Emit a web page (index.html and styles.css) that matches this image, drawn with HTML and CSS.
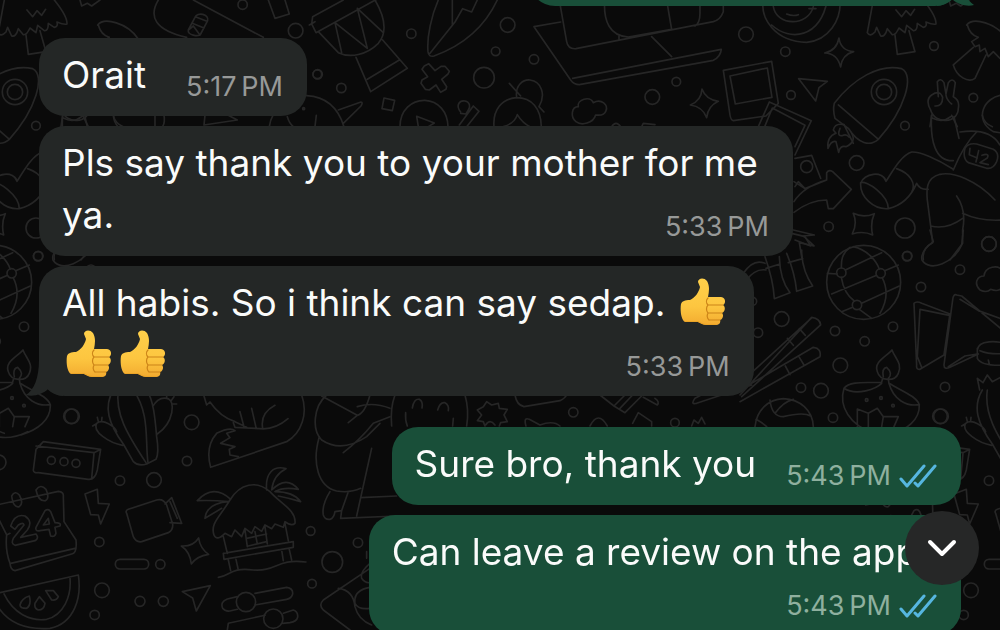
FILE: index.html
```
<!DOCTYPE html>
<html lang="en">
<head>
  <meta charset="UTF-8">
  <meta name="viewport" content="width=device-width, initial-scale=1.0">
  <title>Chat</title>
  <link rel="stylesheet" href="styles.css">
</head>
<body>
  <!-- Wallpaper: one set of doodles, repeated sideways -->
  <svg class="wallpaper" viewBox="0 0 1000 630" preserveAspectRatio="xMinYMin slice" aria-hidden="true">
    <g id="doodles">
      <g transform="scale(.3333)">
        <path d="M240 0L245 18L262 10L275 18L300 0M475 0C445 50 465 90 560 112M580 0L790 112M805 0L825 55L868 42L855 0"/>
        <path d="M565 90L585 52C592 35 628 42 623 62L602 102C595 112 562 105 565 90M577 70L612 84M586 50L621 64M568 88L580 78L600 105"/>
        <circle cx="728" cy="14" r="14"/><circle cx="887" cy="92" r="22"/><circle cx="952" cy="223" r="13"/>
        <path d="M188 346L183 380M248 346L265 380M190 354Q220 370 245 350M340 346Q345 370 370 380M465 346V380M492 346Q496 365 488 380M615 346L612 375L712 360L682 344"/>
        <path d="M808 380C815 330 860 285 920 287C980 290 1015 325 1032 380M862 350Q868 370 880 380M949 346L945 380M1015 330L1083 306Q1090 306 1083 318L1030 370"/>
        <circle cx="911" cy="326" r="3"/>
      </g>
      <g transform="translate(300 0) scale(.3333)">
        <path d="M130 0L38 50L35 72L48 98L235 -5M28 75L45 65M55 95L115 158C150 175 200 165 235 130C260 100 260 60 225 0M105 68L125 158M105 68L202 145L172 25L250 98M168 172L212 275L322 205L248 120M202 238L298 180"/>
        <circle cx="53" cy="223" r="14"/><circle cx="124" cy="264" r="14"/><circle cx="334" cy="101" r="14"/>
        <path d="M252 294L284 301L277 332L246 326Z"/>
        <path d="M415 0C395 45 380 110 384 155Q386 172 402 168C480 140 550 90 592 0M457 0V73M390 160L465 66L488 26L515 36L532 0"/>
        <path d="M373 198L386 191L405 212L423 199L435 199L448 214L444 222L425 238L440 260L438 268L422 277L408 255L388 270L376 268L363 250L366 240L383 230L366 208Z"/>
        <circle cx="623" cy="75" r="22"/><circle cx="587" cy="154" r="13"/><circle cx="552" cy="233" r="31"/><circle cx="702" cy="178" r="14"/>
        <path d="M300 380C300 330 335 300 375 301C415 303 443 335 444 380M355 380L350 349L403 369L385 380"/>
        <path d="M482 336C465 315 480 300 495 303C510 306 512 320 505 330L498 342L482 340M478 375L520 318L537 334L500 380"/>
        <path d="M582 380C578 330 605 296 650 293C695 293 723 325 724 380M610 380Q645 370 652 344Q668 370 690 380M628 250L662 288M650 292C645 255 670 238 690 240C725 244 738 285 717 320L732 336"/>
        <path d="M828 365C810 350 815 320 835 320C830 300 870 285 880 308C905 295 925 315 918 332C912 350 895 345 887 345C880 370 845 378 828 365"/>
        <path d="M778 0L800 125Q804 148 828 146L1240 65Q1262 58 1270 35V0M782 66L702 80L812 240Q822 254 838 254L1240 181Q1262 170 1264 148L818 235M914 0C910 65 930 108 985 111M957 107V118M985 111L1115 88M1115 88L1100 0M1055 110L1115 170M1185 78Q1200 70 1200 40V0"/>
        <circle cx="1057" cy="291" r="22"/><circle cx="1129" cy="245" r="13"/>
        <path d="M935 380Q948 360 962 380M1025 380L1030 370L1065 374"/>
      </g>
      <g transform="translate(640 0) scale(.3333)">
        <path d="M370 0C360 55 405 125 500 127C565 122 605 60 600 0M395 75C450 125 540 115 562 0M400 20C410 80 505 80 520 20M440 42Q460 50 475 44M507 26H528"/>
        <circle cx="318" cy="103" r="22"/><circle cx="436" cy="155" r="14"/><circle cx="453" cy="285" r="13"/><circle cx="882" cy="138" r="13"/><circle cx="1000" cy="293" r="13"/><circle cx="795" cy="377" r="13"/><circle cx="650" cy="489" r="22"/><circle cx="566" cy="680" r="14"/><circle cx="795" cy="684" r="30"/><circle cx="1047" cy="732" r="22"/><circle cx="801" cy="769" r="14"/>
        <path d="M597 114Q602 152 641 155Q606 164 602 201Q592 160 554 159Q590 152 597 114ZM186 267Q197 298 235 304Q204 318 200 353Q188 320 151 315Q184 302 186 267ZM640 640Q670 655 703 641Q690 670 698 705Q670 692 637 702Q653 670 640 640ZM476 236L562 244L537 263L527 303Z"/>
        <path d="M250 211L395 184L415 310L378 348L280 362Q272 360 270 345ZM270 228L382 204L396 292L286 312ZM355 380L388 306L514 362L465 465M372 385L397 324L495 376L465 440"/>
        <path d="M700 0L682 98Q690 112 705 96L710 82L722 108Q735 112 742 86L757 104Q767 106 777 84L795 98L800 76L820 92Q832 94 832 70L850 82Q862 80 858 66Q880 75 888 72Q890 50 850 0M765 105L772 163L825 155L807 92M768 30L785 50L798 32L812 46L824 28"/>
        <path d="M583 310C640 235 720 190 785 206C825 225 795 330 715 418C690 440 655 432 625 385L585 355Q578 330 583 310M595 315L712 415M640 430L612 374"/>
        <circle cx="732" cy="276" r="38"/><circle cx="732" cy="276" r="23"/>
        <path d="M612 374Q585 368 580 390L588 400Q560 410 564 445Q575 420 588 425L596 457Q600 435 618 440Q650 425 635 400M600 385Q590 410 606 407Q620 400 628 412"/>
        <path d="M980 75C1000 50 1070 70 1100 115L1098 180M982 75Q990 105 1015 112L995 125L1005 140L1018 135L1020 155L1035 145L1045 170L1060 155L1080 175M1000 142L940 195C950 230 985 250 1005 235L1038 165"/>
        <path d="M895 290L892 245Q902 232 912 248L918 282L925 248Q937 232 946 248L940 290Q960 300 955 325C955 370 885 375 872 330Q855 300 875 285Q900 268 908 292Q908 320 885 318M918 285Q920 300 935 312M875 345C870 420 885 485 940 482M942 350L957 415M960 396C1000 390 1055 392 1080 435M1090 285C1030 290 1000 360 1060 395L1090 400M940 510C965 450 985 420 1010 396M940 508C890 475 840 455 815 456C785 465 760 510 738 544C730 510 670 520 662 550C660 590 700 630 745 626C790 615 815 585 830 550Q840 570 865 568M662 548C680 540 745 585 745 626M770 506C810 520 830 550 815 577M1065 600C1010 540 940 515 900 523C855 535 860 575 862 600L872 678L878 728Q845 745 850 780M872 678Q920 690 968 655M950 588Q980 630 968 690V730L930 780M968 640Q1020 665 1090 660"/>
        <path d="M975 445Q985 428 1010 432L1060 448Q1080 460 1070 485Q1060 508 1040 505L985 488Q967 475 975 445M990 445L988 464L1012 474M1016 452L1008 486M1026 466Q1050 458 1042 474L1020 488L1045 494"/>
        <path d="M465 475L515 466L542 535M462 545L495 566L560 540V518Q567 508 578 515L634 568L580 626H565L560 600Q510 600 462 637M462 605Q490 560 560 540M465 560L475 545L495 566M460 690L523 705L490 708L522 738L478 728L486 776"/>
        <circle cx="500" cy="500" r="18"/>
      </g>
      <g transform="translate(740 230) scale(.3333)">
        <circle cx="371" cy="157" r="111"/><circle cx="304" cy="128" r="14"/><circle cx="422" cy="130" r="14"/><circle cx="351" cy="225" r="14"/>
        <path d="M330 52C300 75 305 100 304 114M304 142C310 180 325 200 343 213M316 120L425 68M262 130L292 132M318 132M275 192L410 136M434 122L475 105M340 50C385 60 410 95 418 117M427 144C450 190 435 225 420 250M365 220L478 168M338 232L305 245M358 238L395 265"/>
        <circle cx="125" cy="267" r="22"/><circle cx="54" cy="308" r="14"/><circle cx="38" cy="214" r="12"/><circle cx="285" cy="303" r="14"/><circle cx="374" cy="334" r="14"/><circle cx="459" cy="290" r="14"/><circle cx="301" cy="406" r="22"/><circle cx="243" cy="482" r="22"/><circle cx="183" cy="473" r="14"/><circle cx="279" cy="563" r="14"/><circle cx="603" cy="559" r="22"/><circle cx="615" cy="471" r="14"/><circle cx="502" cy="78" r="14"/><circle cx="543" cy="171" r="14"/><circle cx="747" cy="42" r="22"/><circle cx="660" cy="119" r="14"/>
        <path d="M570 0L580 35Q540 65 546 90C570 130 645 95 665 45L670 0M720 180C700 160 712 138 732 138C735 110 775 100 790 125M720 180Q740 190 752 178Q785 190 790 160"/>
        <path d="M75 80Q100 150 103 206L150 188Q120 150 118 80M78 115L120 102M140 70Q165 130 170 184L218 168Q185 120 185 60M145 98L188 86M155 10L195 20L212 48L165 30M10 130Q40 85 75 100M20 150Q45 115 78 120"/>
        <path d="M0 495L215 262Q240 265 242 285L5 500M38 425L215 264M0 515L240 380Q245 355 220 352L35 460M142 325L160 346M178 296L196 316M136 408L150 434M178 382L192 405M-130 520Q-150 525 -135 505L38 415M-130 520L35 465"/>
        <path d="M45 590C50 540 85 508 130 506C180 508 218 540 220 590M90 510Q95 560 130 560Q190 545 212 558M160 508Q130 515 105 550M48 568Q70 580 80 590"/>
        <path d="M412 425C400 395 440 380 456 360C465 385 488 400 475 430C465 455 420 455 412 425M430 440Q425 415 440 412Q460 430 445 445M428 445L425 457M445 445L447 462M425 457C390 460 330 450 312 475C295 530 330 585 400 610M312 475C350 500 410 475 425 460M447 460C460 510 500 530 538 524C530 500 490 485 447 460M538 524C540 570 500 600 450 615M352 590V537L385 550L412 535L430 560L475 560L462 590M385 550L385 590M430 560L425 590M340 605Q400 640 470 605"/>
        <circle cx="380" cy="510" r="4"/><circle cx="423" cy="504" r="4"/><circle cx="459" cy="527" r="4"/>
        <path d="M522 220Q530 212 545 220L630 252L612 375L540 418Q528 420 530 405ZM540 238L628 256M540 238L532 380L545 412M650 195Q640 190 638 210L612 405Q612 420 630 412L715 372M650 195L665 198L800 310M660 208L715 242L800 272M625 410L675 378L712 372"/>
        <path d="M712 360C715 330 770 330 810 345M712 355V385Q725 410 800 405M720 362Q750 375 800 370M745 390L748 402"/>
      </g>
      <g transform="translate(0 390) scale(.3333)">
        <path d="M100 240L108 178L130 155L302 178L292 240Q285 270 265 268L115 248Q100 250 100 240M108 168L282 188L298 180M282 190L275 265"/>
        <circle cx="154" cy="211" r="12"/><circle cx="192" cy="215" r="12"/><circle cx="228" cy="220" r="12"/><circle cx="213" cy="79" r="22"/><circle cx="-4" cy="217" r="22"/><circle cx="360" cy="272" r="14"/><circle cx="462" cy="270" r="22"/><circle cx="575" cy="97" r="22"/><circle cx="561" cy="213" r="14"/><circle cx="298" cy="456" r="14"/><circle cx="481" cy="523" r="14"/><circle cx="306" cy="601" r="22"/><circle cx="284" cy="675" r="14"/><circle cx="420" cy="634" r="15"/><circle cx="490" cy="634" r="15"/><circle cx="932" cy="423" r="13"/><circle cx="1074" cy="458" r="14"/><circle cx="997" cy="516" r="31"/><circle cx="936" cy="581" r="13"/>
        <path d="M340 0C310 50 325 100 370 162L400 215Q415 230 440 222L468 208Q478 190 470 140C465 80 460 30 440 0M355 0C345 70 380 130 438 218M400 0C450 70 435 150 444 218M368 166C330 160 275 125 290 100C310 85 345 110 350 125M288 102L278 108M295 95L292 82M305 92L306 82M458 50Q475 20 500 25C530 30 520 100 472 132M500 25V15M515 30L522 20M519 42H530M332 0L325 -35L342 -22L355 -45L370 -25L395 -38L400 0"/>
        <path d="M612 18L620 45L630 36Q660 80 705 95L740 112M720 65L732 110M755 55L768 112M825 46Q780 70 788 114M864 86Q825 120 780 116L705 112L700 98M905 15C925 70 905 130 860 155L632 232Q615 170 650 130Q690 110 705 122L680 130L690 143L662 160L705 170L688 178L690 195L715 200"/>
        <path d="M980 15C940 50 935 120 965 150Q1025 190 1100 140L1140 100M965 18L1072 76L1045 98M1072 76Q1095 70 1110 15M1072 50Q1120 35 1170 55M1030 188Q1080 150 1120 100L1170 80M958 140C935 220 955 290 1010 303Q1050 310 1082 295M1115 175L1070 378M1082 323L1190 318M990 305Q965 345 970 375Q975 390 990 388Q1002 385 1005 365L1025 362L1045 305M1025 362L1022 385L1190 378"/>
        <path d="M-10 345L175 304Q192 305 190 320L192 395L228 450Q232 490 215 492L45 542Q32 540 30 520Q15 480 20 435L-5 385M20 435L30 430M32 520L225 475M35 318Q45 300 58 315Q72 340 58 350Q40 355 35 318M108 300Q122 280 138 298Q150 325 136 332Q115 335 108 300"/>
        <path d="M32 408Q45 370 75 378Q100 395 82 420L62 442L108 432Q118 445 105 452L45 466Q32 462 40 445L72 405Q70 395 55 405L45 418ZM135 362L108 412Q105 425 120 422L147 418L152 438Q165 442 168 430L165 412L180 408Q185 398 165 398L152 365Q145 355 135 362M145 385L130 405L148 402Z"/>
        <path d="M255 312L292 298L295 340L328 342L302 402L295 375L272 374Z"/>
        <path d="M380 370Q375 362 385 358L470 330Q490 325 500 345L518 402Q520 420 505 428L425 455Q408 458 400 440ZM495 342L515 323L545 400L510 398M510 335L532 385"/>
        <path d="M596 444Q600 475 626 493Q590 498 574 522Q570 485 544 468Q580 470 596 444ZM547 605L631 587L589 663L578 624Z"/>
        <rect x="346" y="508" width="100" height="29" rx="14"/>
        <path d="M0 608L235 555C245 620 225 700 150 715C80 720 20 700 -12 640M12 612C40 670 90 695 140 688C190 675 215 620 210 564M60 645Q65 625 88 618Q95 645 80 655Q60 655 60 645M105 640L118 620L135 640Q132 660 115 660Q102 655 105 640M137 602L160 602L175 620Q170 632 155 630Z"/>
        <path d="M642 435C630 400 660 380 690 330C720 280 770 270 810 305C840 340 890 360 885 400Q875 410 855 395L850 412L825 402L815 416L795 405L785 424L765 410L755 430L735 415L725 440L705 420L695 440L675 430Q650 455 642 435M692 328Q640 280 592 332Q640 330 685 335Q620 340 615 385Q640 370 665 355M800 300C795 250 820 225 858 236Q820 255 815 300M815 300Q860 255 895 298Q850 290 825 305Q880 305 902 335Q870 325 835 318M670 440L682 490M735 420L742 470M795 410L802 462M855 400L865 452M740 445L800 432M745 468L800 455M670 490L880 455V472L672 508ZM685 510L692 542M708 508L715 540M845 480L850 512M868 478L875 510M655 562C690 560 690 530 760 540C830 545 830 505 918 516M765 425L772 462"/>
        <path d="M712 620L682 627Q660 635 668 655Q675 665 690 663L712 658M765 610L860 592Q880 595 878 612Q875 625 860 628L765 645M682 720L685 700L795 676M850 670L880 660Q895 665 893 682Q890 695 870 698L848 700"/>
        <circle cx="738" cy="636" r="29"/><circle cx="820" cy="686" r="29"/>
        <path d="M1110 535L970 630Q955 645 970 660L1050 720M1015 595Q1060 600 1065 650Q1075 690 1115 705M1110 520Q1080 545 1085 565Q1095 580 1110 578M1110 592Q1060 600 1065 640Q1075 660 1110 655M1100 485V505"/>
      </g>
      <g transform="translate(220 380) scale(.3333)">
        <path d="M525 45Q510 85 515 138M735 45Q748 90 740 138M577 84Q582 55 598 58Q610 65 606 84M653 90Q660 65 675 68Q688 75 685 92M557 98Q555 120 562 138M700 115L698 138"/>
        <path d="M790 80L800 65L815 75L835 70L838 85L862 88L852 105L862 125L842 128L838 138M790 80L772 90L785 105L772 122L790 125L795 138M797 135Q810 115 825 135"/>
        <path d="M885 45Q890 75 912 80L1020 62Q1035 55 1040 45M918 138Q910 110 928 118L960 135Q1000 120 1020 138M1110 138Q1135 90 1162 138M1140 45L1182 78L1215 98L1265 48M1182 78L1215 45M1200 85L1238 45M1270 52L1312 75Q1320 65 1305 55M1238 130L1255 98L1295 125V138M1415 138L1422 120L1435 130L1445 112L1455 132"/>
        <circle cx="1060" cy="97" r="14"/><circle cx="1365" cy="128" r="13"/>
      </g>
    </g>
    <use href="#doodles" x="-869"/>
    <use href="#doodles" x="869"/>
  </svg>

  <!-- Shared icons -->
  <svg class="defs" aria-hidden="true">
    <defs>
      <linearGradient id="skin" x1="0" y1="0" x2="0" y2="1">
        <stop offset="0" stop-color="#ffd04a"/>
        <stop offset="0.6" stop-color="#fdc640"/>
        <stop offset="1" stop-color="#f3ab30"/>
      </linearGradient>
    </defs>
    <symbol id="thumb" viewBox="0 0 46 48">
      <path fill="url(#skin)" d="M1 26C2 23 5 22 10 22C15 20 19 14 20 9L18 4C18 0 24-1 27 3C30 8 29 14 28 19L41 19C46 19 46 26 43 27C46 29 45 34 42 35C44 37 43 41 40 42C41 45 39 47 36 47L27 47C23 47 21 45 18 44L5 44C1 42 0 32 1 26Z"/>
      <path fill="none" stroke="#cc8418" stroke-width="1.2" stroke-linecap="round" d="M28 20C26 22 26 25 28 27C26 29 26 33 28 35C27 37 27 40 29 42M28 27H43M28 35H42M29 42H40"/>
      <path fill="none" stroke="#eba427" d="M5 43.5L18 43.5C21 45 23 46.500 27 46.500L36 46.500"/>
    </symbol>
    <symbol id="ticks" viewBox="0 0 38 26">
      <path d="M2 16L8 23L25 3M16 20L19 23L36 3" fill="none" stroke="#56b6e0" stroke-width="3" stroke-linecap="round" stroke-linejoin="round"/>
    </symbol>
    <symbol id="tail" viewBox="0 0 37 36">
      <path d="M13 0C13 18 8 30 0 35C8 37 17 34 22 29C26 33 31 36 37 36V0Z"/>
    </symbol>
  </svg>

  <main class="chat">
    <div class="bubble sent previous">
      <svg class="tail"><use href="#tail"/></svg>
    </div>
    <div class="bubble">
      Orait<time class="time">5:17&#8201;PM</time>
    </div>
    <div class="bubble long">
      Pls say thank you to your mother for me<br>ya.<time class="time">5:33&#8201;PM</time>
    </div>
    <div class="bubble last">
      <svg class="tail"><use href="#tail"/></svg>
      All habis. So i think can say sedap. <svg class="emoji" role="img" aria-label="thumbs up"><use href="#thumb"/></svg><br><svg class="emoji" role="img" aria-label="thumbs up"><use href="#thumb"/></svg><svg class="emoji" role="img" aria-label="thumbs up"><use href="#thumb"/></svg><time class="time">5:33&#8201;PM</time>
    </div>
    <div class="bubble sent">
      Sure bro, thank you<span class="time"><time>5:43&#8201;PM</time><svg class="ticks" role="img" aria-label="Read"><use href="#ticks"/></svg></span>
    </div>
    <div class="bubble sent">
      Can leave a review on the app?<br><span class="time below"><time>5:43&#8201;PM</time><svg class="ticks" role="img" aria-label="Read"><use href="#ticks"/></svg></span>
    </div>
  </main>

  <button class="scroll-down" aria-label="Scroll to bottom">
    <svg viewBox="0 0 30 20" aria-hidden="true"><path d="M3 4L15 16L27 4"/></svg>
  </button>
</body>
</html>
```
FILE: styles.css
```
* {
  box-sizing: border-box;
}

body {
  margin: 0;
  height: 100vh;
  overflow: hidden;
  background-color: #0a0a0a;
  color: #fafbfa;
  font-family: Inter, "Liberation Sans", sans-serif;
  font-size: 37px;
  line-height: 52px;
}

.wallpaper {
  position: fixed;
  inset: 0;
  width: 100%;
  height: 100%;
  fill: none;
  stroke: #262626;
  stroke-width: 5px;
  stroke-linecap: round;
  stroke-linejoin: round;
}

.defs {
  position: absolute;
  width: 0;
  height: 0;
}

.chat {
  position: relative;
  display: flex;
  flex-direction: column;
  align-items: flex-start;
  gap: 10px;
  padding: 0 39px;
}

.bubble {
  position: relative;
  display: flow-root;
  min-width: 268px;
  padding: 11px 24px 13px 23px;
  border-radius: 26px;
  background-color: #242726;
  white-space: nowrap;
}

.sent {
  align-self: flex-end;
  background-color: #194f39;
}

/* only its lower edge is still on screen */
.previous {
  width: 432px;
  height: 78px;
  margin-top: -72px;
  margin-bottom: 22px;
}

.long {
  min-width: 754px;
}

.last {
  margin-bottom: 21px;
}

.tail {
  position: absolute;
  left: -13px;
  bottom: 0;
  width: 37px;
  height: 36px;
  fill: #242726;
}

.sent .tail {
  left: auto;
  right: -13px;
  fill: #194f39;
  transform: scaleX(-1);
}

.time {
  float: right;
  display: flex;
  align-items: center;
  gap: 8px;
  height: 32px;
  margin: 22px 0 0 30px;
  color: #979998;
  font-size: 27px;
  line-height: 32px;
}

.sent .time {
  color: #8fb09f;
}

.below {
  margin-top: 12px;
}

.ticks {
  width: 38px;
  height: 26px;
}

.emoji {
  width: 46px;
  height: 48px;
  margin: 0 4px;
  vertical-align: -10px;
}

.scroll-down {
  position: fixed;
  right: 21px;
  bottom: 45px;
  display: flex;
  align-items: center;
  justify-content: center;
  width: 74px;
  height: 74px;
  border: none;
  border-radius: 50%;
  background-color: #262727;
  cursor: pointer;
}

.scroll-down svg {
  width: 30px;
  height: 20px;
  fill: none;
  stroke: #fff;
  stroke-width: 4px;
  stroke-linecap: round;
  stroke-linejoin: round;
}
```
